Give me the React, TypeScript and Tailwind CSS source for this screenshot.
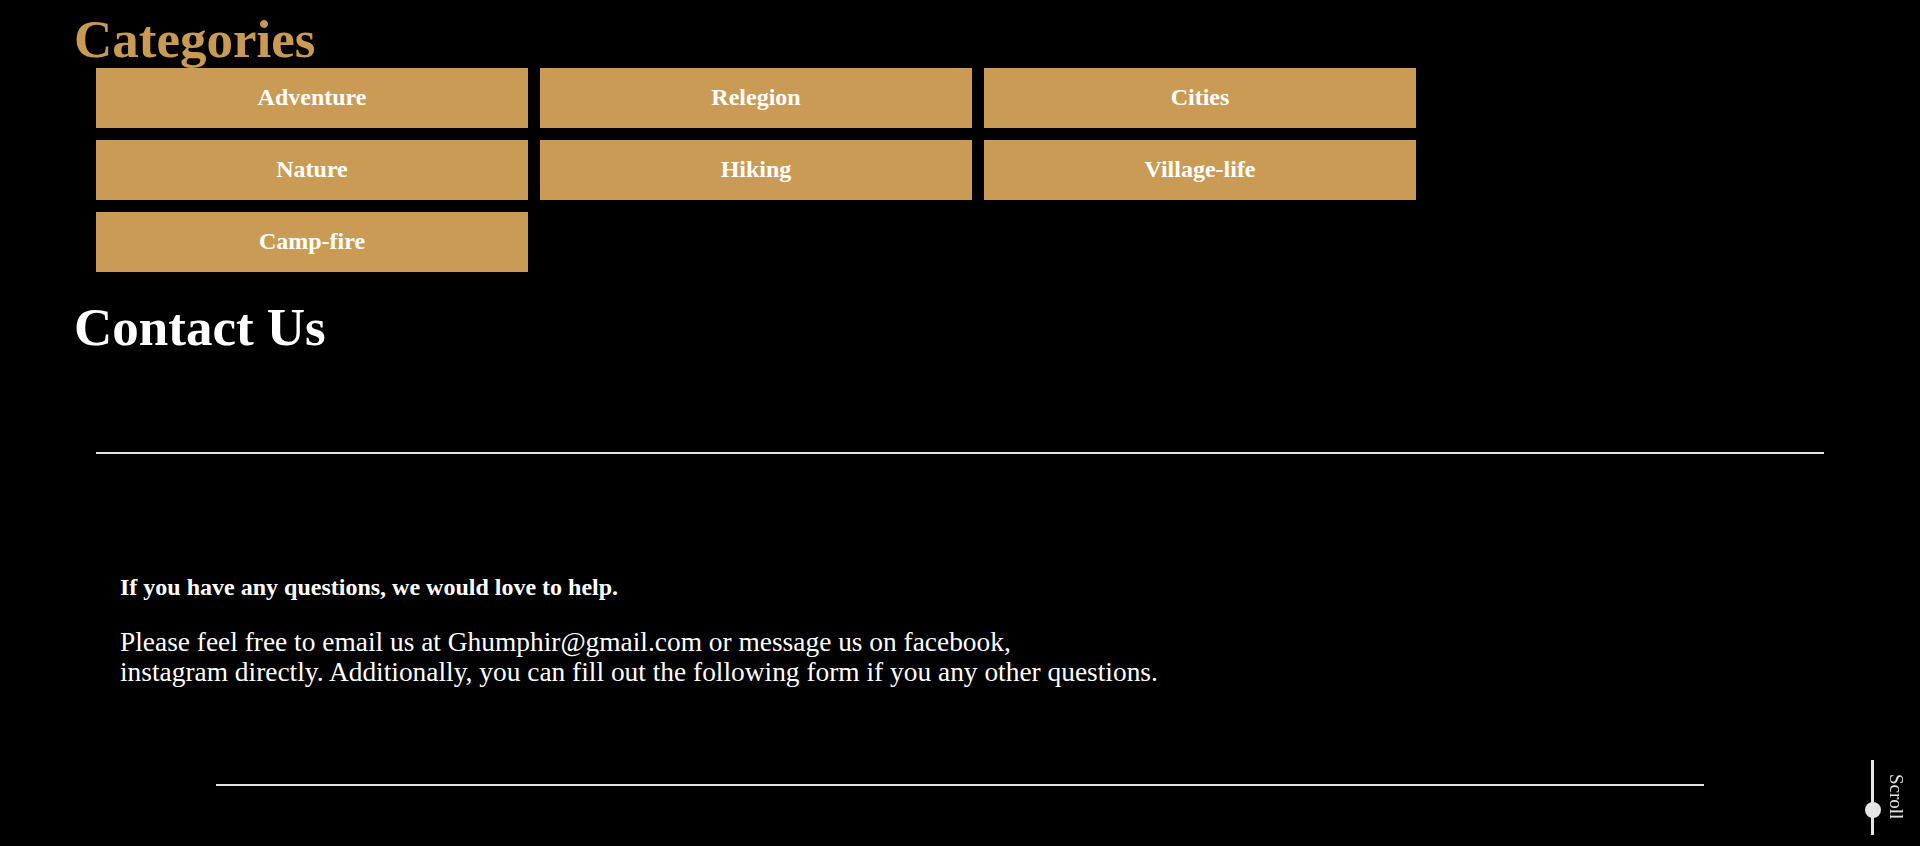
const categories = [
  "Adventure",
  "Relegion",
  "Cities",
  "Nature",
  "Hiking",
  "Village-life",
  "Camp-fire",
];

const App = () => {
  return (
    <div className="relative min-h-screen bg-black text-white font-['Liberation_Serif','Times_New_Roman',serif]">
      <section className="px-[74px]">
        <h1 className="pt-[11px] text-[53px] leading-[57px] font-bold text-[#c99a53]">
          Categories
        </h1>
        <div className="mx-[22px] grid w-[1320px] grid-cols-3 gap-3">
          {categories.map((c) => (
            <button
              key={c}
              className="flex h-[60px] items-center justify-center bg-[#ca9b54] pb-[2px] text-[24px] font-bold text-white"
            >
              {c}
            </button>
          ))}
        </div>
        <h2 className="mt-[27px] text-[53px] leading-[57px] font-bold text-white">
          Contact Us
        </h2>
      </section>

      <section className="px-24">
        <div className="mt-24 h-0.5 bg-[#e2e2e2]" />
        <div className="px-6 pt-[119px]">
          <p className="text-[24px] leading-[28px] font-bold">
            If you have any questions, we would love to help.
          </p>
          <p className="mt-[26px] text-[27.4px] leading-[30px]">
            Please feel free to email us at Ghumphir@gmail.com or message us on facebook,
            <br />
            instagram directly. Additionally, you can fill out the following form if you any other questions.
          </p>
        </div>
        <div className="mx-[120px] mt-[97px] h-0.5 bg-[#e2e2e2]" />
      </section>

      <div className="fixed bottom-[11px] right-[14px] flex items-start gap-3">
        <div className="relative h-[75px] w-[3px] bg-[#e5e5e5]">
          <span className="absolute left-1/2 top-[42px] h-4 w-4 -translate-x-1/2 rounded-full bg-[#e5e5e5]" />
        </div>
        <span className="mt-[14px] text-[19px] leading-[20px] text-[#e0e0e0] [writing-mode:vertical-rl]">
          Scroll
        </span>
      </div>
    </div>
  );
};

export default App;
